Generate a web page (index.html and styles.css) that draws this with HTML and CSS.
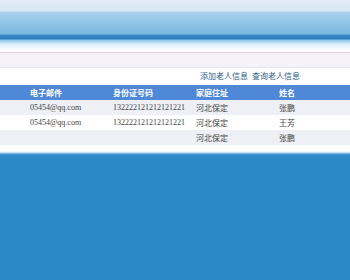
FILE: index.html
```html
<!DOCTYPE html>
<html lang="zh-CN">
<head>
  <meta charset="UTF-8" />
  <title>老人信息</title>
  <link rel="stylesheet" href="styles.css">
</head>
<body>

  <div class="header"></div>

  <div class="crumb"></div>

  <div class="main">
    <div class="actions">
      <a href="#">添加老人信息</a>
      <a href="#">查询老人信息</a>
    </div>

    <table class="list">
      <tr class="head">
        <th>电子邮件</th>
        <th>身份证号码</th>
        <th>家庭住址</th>
        <th>姓名</th>
      </tr>
      <tr class="odd">
        <td>05454@qq.com</td>
        <td>132222121212121221</td>
        <td>河北保定</td>
        <td>张鹏</td>
      </tr>
      <tr>
        <td>05454@qq.com</td>
        <td>132222121212121221</td>
        <td>河北保定</td>
        <td>王芳</td>
      </tr>
      <tr class="odd">
        <td></td>
        <td></td>
        <td>河北保定</td>
        <td>张鹏</td>
      </tr>
    </table>
  </div>

  <div class="footer"></div>

</body>
</html>
```

FILE: styles.css
```css
html, body {
  height: 100%;
  margin: 0;
  padding: 0;
}

body {
  display: flex;
  flex-direction: column;
  background: #2c89c8;
  font-family: "Liberation Serif", "Noto Sans CJK SC", serif;
  font-size: 8px;
  color: #444;
}

/* top banner */
.header {
  height: 52px;
  background: linear-gradient(to bottom,
    #e4edf8 0px, #d8e5f4 11px,
    #b9d5ee 12px, #a6cfed 13px, #7ab8e1 34px,
    #3a8cc8 35px, #2a7dbc 39px,
    #8cc6ea 40px, #d8edf9 44px, #f4f8fe 48px, #ffffff 52px);
}

.crumb {
  height: 14px;
  background: #f4f2f6;
  border-top: 1px solid #e2d2dc;
  border-bottom: 1px solid #ebe7ef;
}

.main {
  background: #fff;
  padding-bottom: 6px;
}

.actions {
  height: 17px;
  line-height: 17px;
  padding-left: 200px;
}

.actions a {
  color: #2c5c8a;
  text-decoration: none;
  margin-right: 2px;
}

.list {
  width: 100%;
  border-collapse: collapse;
}

.list th,
.list td {
  height: 15px;
  padding: 0;
  text-align: left;
  white-space: nowrap;
}

.list td {
  color: #444;
}

.list th:first-child,
.list td:first-child {
  padding-left: 30px;
  width: 83px;
}

.list th:nth-child(2),
.list td:nth-child(2),
.list th:nth-child(3),
.list td:nth-child(3) {
  width: 83px;
}

.head {
  background: #4f88d6;
  color: #fff;
}

.head th {
  font-weight: bold;
}

.odd {
  background: #efeff6;
}

.footer {
  flex: 1;
  background: linear-gradient(to bottom,
    #ffffff 0px, #e2f1fb 1px, #a6d3f0 2px, #4a9ad0 3px, #2c89c8 5px);
}
```
